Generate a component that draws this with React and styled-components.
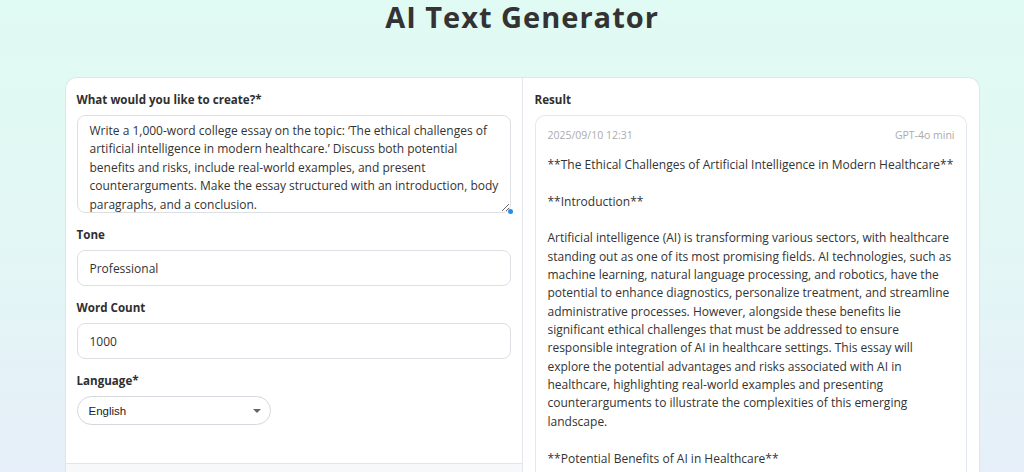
import React from "react";
import styled, { createGlobalStyle } from "styled-components";

const Global = createGlobalStyle`
  html, body { margin: 0; padding: 0; }
  body {
    width: 1024px;
    height: 472px;
    overflow: hidden;
    background: linear-gradient(180deg, #e0fbf3 0%, #e2f8f4 40%, #e6eff9 100%);
    font-family: "Open Sans", "Noto Sans", sans-serif;
    color: #333;
  }
  * { box-sizing: border-box; }
`;

const Page = styled.div`
  display: flex;
  flex-direction: column;
  align-items: center;
  height: 472px;
  padding-left: 20px;
`;

const Title = styled.h1`
  margin: 0;
  font-size: 29px;
  line-height: 34px;
  font-weight: 700;
  color: #333;
  letter-spacing: 1px;
`;

const Card = styled.div`
  margin-top: 43px;
  width: 915px;
  flex: 1;
  display: grid;
  grid-template-columns: 457px 1fr;
  background: #fff;
  border: 1px solid #dfe5ec;
  border-bottom: none;
  border-radius: 12px 12px 0 0;
  overflow: hidden;
`;

const Column = styled.section`
  display: flex;
  flex-direction: column;
  border-right: ${(p) => (p.$divider ? "1px solid #e4e8ee" : "none")};
  padding: ${(p) => (p.$pad ? "13px 12px 0 12px" : "0")};
`;

const Form = styled.div`
  padding: 13px 11px 38px 11px;
  display: flex;
  flex-direction: column;
  gap: 13px;
`;

const Field = styled.div`
  display: flex;
  flex-direction: column;
  gap: 6px;
`;

const Label = styled.label`
  font-size: 11.6px;
  line-height: 18px;
  font-weight: 700;
  color: #2f2f2f;
`;

const TextAreaWrap = styled.div`
  position: relative;
`;

const TextArea = styled.textarea`
  display: block;
  width: 100%;
  height: 98px;
  padding: 6px 12px;
  border: 1px solid #dcdfe4;
  border-radius: 8px;
  font-family: inherit;
  font-size: 12px;
  line-height: 18.4px;
  color: #333;
  white-space: pre;
  overflow: hidden;
  resize: vertical;
  outline: none;
`;

const Dot = styled.span`
  position: absolute;
  right: -2px;
  bottom: -1px;
  width: 5px;
  height: 5px;
  border-radius: 50%;
  background: #2b8be6;
`;

const Input = styled.input`
  display: block;
  width: 100%;
  height: 36px;
  padding: 0 12px;
  border: 1px solid #dcdfe4;
  border-radius: 8px;
  font-family: inherit;
  font-size: 12px;
  color: #333;
  outline: none;
`;

const SelectWrap = styled.div`
  position: relative;
  width: 194px;
  &::after {
    content: "";
    position: absolute;
    right: 10px;
    top: 13px;
    border-left: 4px solid transparent;
    border-right: 4px solid transparent;
    border-top: 4px solid #666;
  }
`;

const Select = styled.select`
  appearance: none;
  width: 100%;
  height: 29px;
  padding: 0 11px;
  border: 1px solid #d4d7dc;
  border-radius: 15px;
  background: #fff;
  font-family: "Liberation Sans", Arial, sans-serif;
  font-size: 11.5px;
  color: #222;
  outline: none;
`;

const Footer = styled.div`
  flex: 1;
  border-top: 1px solid #e4e6ea;
  background: #f7f8f9;
`;

const ResultBox = styled.div`
  margin-top: 6px;
  flex: 1;
  border: 1px solid #e3e8ee;
  border-bottom: none;
  border-radius: 10px 10px 0 0;
  padding: 11px 11px 0 12px;
  display: flex;
  flex-direction: column;
  gap: 13px;
`;

const Meta = styled.div`
  display: flex;
  justify-content: space-between;
  font-size: 10.5px;
  line-height: 16px;
  color: #ababab;
`;

const Body = styled.div`
  font-size: 12px;
  line-height: 18.35px;
  color: #333;
  white-space: pre;
`;

const prompt =
  "Write a 1,000-word college essay on the topic: \u2018The ethical challenges of\nartificial intelligence in modern healthcare.\u2019 Discuss both potential\nbenefits and risks, include real-world examples, and present\ncounterarguments. Make the essay structured with an introduction, body\nparagraphs, and a conclusion.";

const result = `**The Ethical Challenges of Artificial Intelligence in Modern Healthcare**

**Introduction**

Artificial intelligence (AI) is transforming various sectors, with healthcare
standing out as one of its most promising fields. AI technologies, such as
machine learning, natural language processing, and robotics, have the
potential to enhance diagnostics, personalize treatment, and streamline
administrative processes. However, alongside these benefits lie
significant ethical challenges that must be addressed to ensure
responsible integration of AI in healthcare settings. This essay will
explore the potential advantages and risks associated with AI in
healthcare, highlighting real-world examples and presenting
counterarguments to illustrate the complexities of this emerging
landscape.

**Potential Benefits of AI in Healthcare**`;

export default function App() {
  return (
    <>
      <Global />
      <Page>
        <Title>AI Text Generator</Title>
        <Card>
          <Column $divider>
            <Form>
              <Field>
                <Label>What would you like to create?*</Label>
                <TextAreaWrap>
                  <TextArea value={prompt} readOnly />
                  <Dot />
                </TextAreaWrap>
              </Field>
              <Field>
                <Label>Tone</Label>
                <Input value="Professional" readOnly />
              </Field>
              <Field>
                <Label>Word Count</Label>
                <Input value="1000" readOnly />
              </Field>
              <Field>
                <Label>Language*</Label>
                <SelectWrap>
                  <Select defaultValue="en">
                    <option value="en">English</option>
                  </Select>
                </SelectWrap>
              </Field>
            </Form>
            <Footer />
          </Column>
          <Column $pad>
            <Label>Result</Label>
            <ResultBox>
              <Meta>
                <span>2025/09/10 12:31</span>
                <span>GPT-4o mini</span>
              </Meta>
              <Body>{result}</Body>
            </ResultBox>
          </Column>
        </Card>
      </Page>
    </>
  );
}
